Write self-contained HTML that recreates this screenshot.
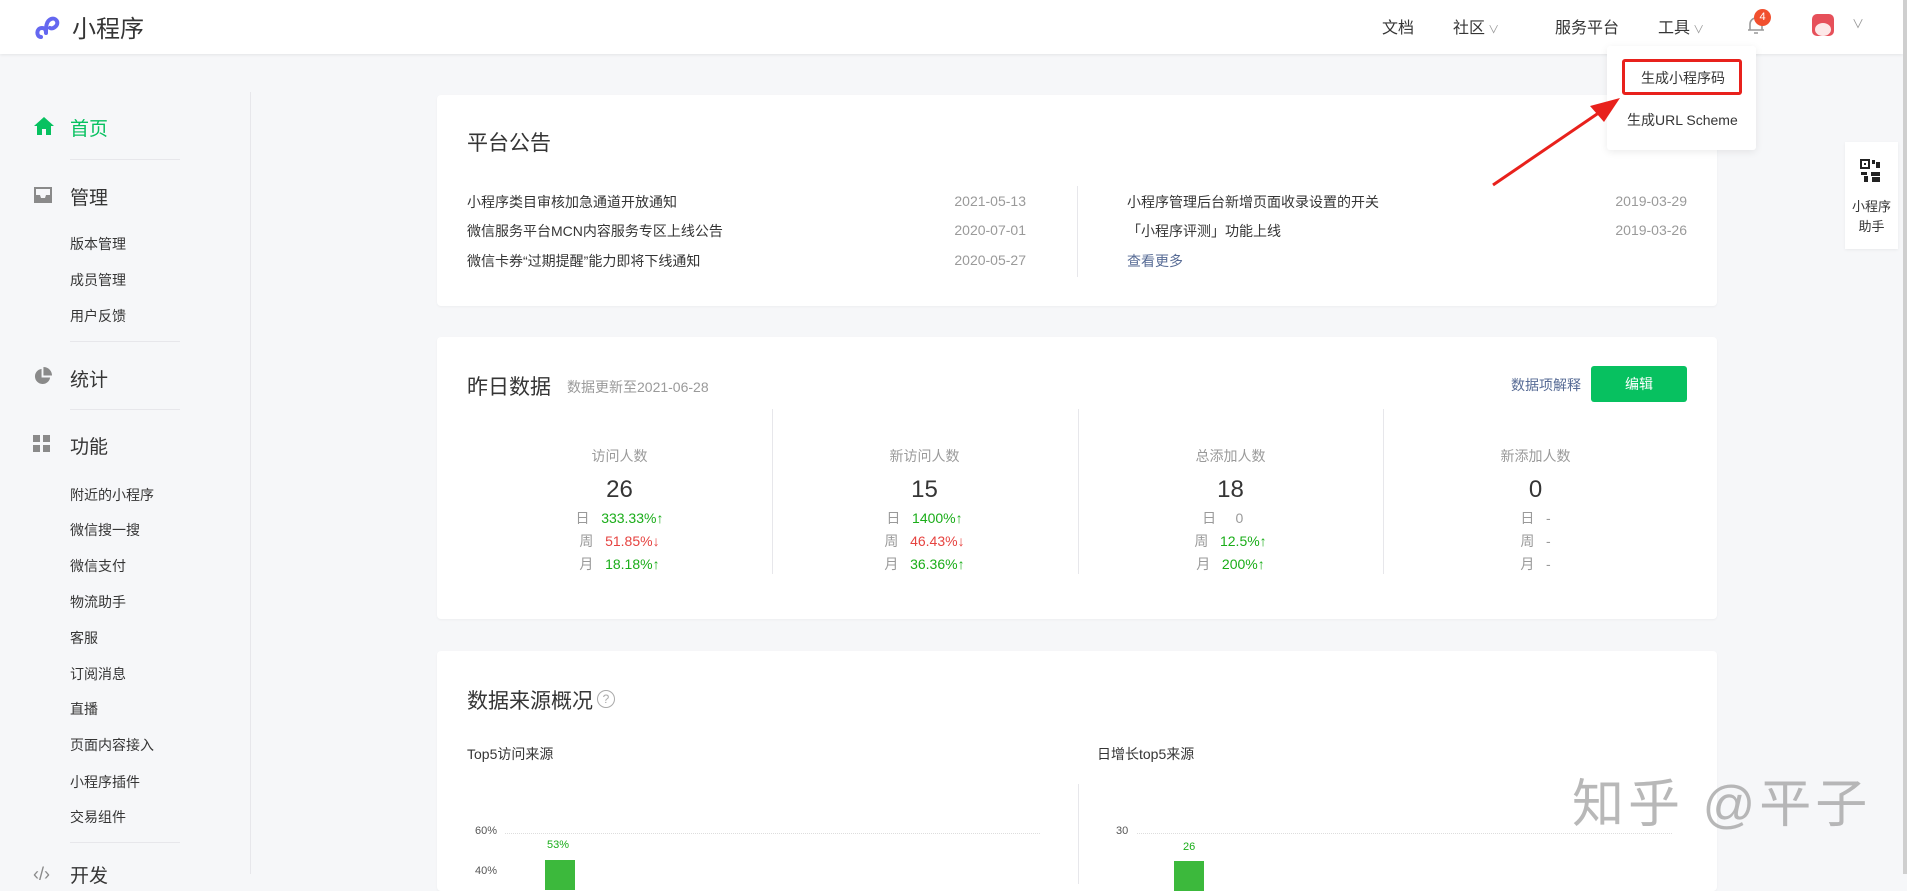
<!DOCTYPE html>
<html><head><meta charset="utf-8"><style>
*{margin:0;padding:0;box-sizing:border-box}
body{width:1907px;height:874px;overflow:hidden;background:#f6f7f9;font-family:"Liberation Sans","Noto Sans CJK SC",sans-serif;color:#353535;position:relative}
.a{position:absolute;white-space:nowrap}
.hdr{position:absolute;left:0;top:0;width:1903px;height:54px;background:#fff;box-shadow:0 1px 3px rgba(0,0,0,.08)}
.card{position:absolute;left:437px;width:1280px;background:#fff;border-radius:4px;box-shadow:0 1px 2px rgba(0,0,0,.04)}
.nav{font-size:19px;color:#353535}
.sub{font-size:14px;color:#353535}
.hl{position:absolute;left:70px;width:110px;height:1px;background:#e7e7eb}
.n{font-size:14px;color:#353535}
.d{font-size:14px;color:#9a9a9a}
.g{color:#1aad19}.r{color:#e64340}
.col{position:absolute;top:0;width:305px;text-align:center}
.st{font-size:14px;line-height:23px;color:#9a9a9a}
</style></head><body>
<div class="hdr"></div>
<svg class="a" style="left:33px;top:11px" width="32" height="32" viewBox="0 0 32 32"><path d="M8 26c-5 0-5-9 1-9M9 17c3 0 4 2 4 5v0M13 22c0-6 0-12 5-14c5-2 9 4 4 8c-2 1.5-4 1.5-5 1" fill="none" stroke="#6467f0" stroke-width="4" stroke-linecap="round"/></svg>
<div class="a" style="left:72px;top:9px;font-size:24px;color:#353535">小程序</div>
<div class="a" style="left:1382px;top:14px;font-size:16px">文档</div>
<div class="a" style="left:1453px;top:14px;font-size:16px">社区<span style="font-size:11px;color:#999"> ∨</span></div>
<div class="a" style="left:1555px;top:14px;font-size:16px">服务平台</div>
<div class="a" style="left:1658px;top:14px;font-size:16px">工具<span style="font-size:11px;color:#999"> ∨</span></div>
<svg class="a" style="left:1745px;top:14px" width="22" height="22" viewBox="0 0 22 22"><path d="M5 16V10a6 6 0 0 1 12 0v6zM3 16h16M9 19h4" fill="none" stroke="#999" stroke-width="1.6"/></svg>
<div class="a" style="left:1754px;top:9px;width:17px;height:17px;border-radius:50%;background:#f1502f;color:#fff;font-size:11px;text-align:center;line-height:17px">4</div>
<div class="a" style="left:1812px;top:14px;width:22px;height:22px;border-radius:5px;background:#e6505a;overflow:hidden"><div style="position:absolute;left:3px;top:9px;width:16px;height:13px;border-radius:50%;background:#fde8e8"></div></div>
<div class="a" style="left:1852px;top:15px;font-size:12px;color:#999">∨</div>
<div class="a" style="left:1903px;top:0;width:4px;height:874px;background:#cfcfcf"></div>

<div class="a" style="left:250px;top:92px;width:1px;height:782px;background:#e7e7eb"></div>
<svg class="a" style="left:33px;top:116px" width="22" height="20" viewBox="0 0 22 20"><path d="M11 1L1 10h3v9h5v-6h4v6h5v-9h3z" fill="#07c160"/></svg>
<div class="a nav" style="left:70px;top:114px;color:#07c160">首页</div>
<div class="hl" style="top:159px"></div>
<svg class="a" style="left:33px;top:186px" width="20" height="18" viewBox="0 0 20 18"><path d="M2 2h16v14H2z" fill="none" stroke="#8a8a8a" stroke-width="2"/><path d="M2 9h5l1 3h4l1-3h5v7H2z" fill="#8a8a8a"/></svg>
<div class="a nav" style="left:70px;top:183px">管理</div>
<div class="a sub" style="left:70px;top:234px">版本管理</div>
<div class="a sub" style="left:70px;top:270px">成员管理</div>
<div class="a sub" style="left:70px;top:306px">用户反馈</div>
<div class="hl" style="top:341px"></div>
<svg class="a" style="left:33px;top:367px" width="19" height="19" viewBox="0 0 20 20"><path d="M9 2A8 8 0 1 0 18 11H9z" fill="#8a8a8a"/><path d="M11 0v9h9A9 9 0 0 0 11 0z" fill="#8a8a8a"/></svg>
<div class="a nav" style="left:70px;top:365px">统计</div>
<div class="hl" style="top:409px"></div>
<svg class="a" style="left:33px;top:435px" width="18" height="18" viewBox="0 0 18 18" fill="#8a8a8a"><rect width="7" height="7"/><rect x="10" width="7" height="7"/><rect y="10" width="7" height="7"/><rect x="10" y="10" width="7" height="7"/></svg>
<div class="a nav" style="left:70px;top:432px">功能</div>
<div class="a sub" style="left:70px;top:485px">附近的小程序</div>
<div class="a sub" style="left:70px;top:520px">微信搜一搜</div>
<div class="a sub" style="left:70px;top:556px">微信支付</div>
<div class="a sub" style="left:70px;top:592px">物流助手</div>
<div class="a sub" style="left:70px;top:628px">客服</div>
<div class="a sub" style="left:70px;top:664px">订阅消息</div>
<div class="a sub" style="left:70px;top:699px">直播</div>
<div class="a sub" style="left:70px;top:735px">页面内容接入</div>
<div class="a sub" style="left:70px;top:772px">小程序插件</div>
<div class="a sub" style="left:70px;top:807px">交易组件</div>
<div class="hl" style="top:842px"></div>
<div class="a" style="left:33px;top:864px;font-size:18px;color:#8a8a8a">‹/›</div>
<div class="a nav" style="left:70px;top:861px">开发</div>

<div class="card" style="top:95px;height:211px">
 <div class="a" style="left:30px;top:32px;font-size:21px">平台公告</div>
 <div class="a n" style="left:30px;top:97px">小程序类目审核加急通道开放通知</div>
 <div class="a n" style="left:30px;top:126px">微信服务平台MCN内容服务专区上线公告</div>
 <div class="a n" style="left:30px;top:156px">微信卡券“过期提醒”能力即将下线通知</div>
 <div class="a d" style="right:691px;top:98px">2021-05-13</div>
 <div class="a d" style="right:691px;top:127px">2020-07-01</div>
 <div class="a d" style="right:691px;top:157px">2020-05-27</div>
 <div class="a" style="left:640px;top:91px;width:1px;height:91px;background:#e7e7eb"></div>
 <div class="a n" style="left:690px;top:97px">小程序管理后台新增页面收录设置的开关</div>
 <div class="a n" style="left:690px;top:126px">「小程序评测」功能上线</div>
 <div class="a n" style="left:690px;top:156px;color:#576b95">查看更多</div>
 <div class="a d" style="right:30px;top:98px">2019-03-29</div>
 <div class="a d" style="right:30px;top:127px">2019-03-26</div>
</div>

<div class="card" style="top:337px;height:282px">
 <div class="a" style="left:30px;top:34px;font-size:21px">昨日数据</div>
 <div class="a" style="left:130px;top:40px;font-size:14px;color:#9a9a9a">数据更新至2021-06-28</div>
 <div class="a" style="right:136px;top:38px;font-size:14px;color:#576b95">数据项解释</div>
 <div class="a" style="left:1154px;top:29px;width:96px;height:36px;background:#07c160;border-radius:3px;color:#fff;font-size:14px;text-align:center;line-height:36px">编辑</div>
 <div class="a" style="left:335px;top:72px;width:1px;height:165px;background:#e7e7eb"></div>
 <div class="a" style="left:641px;top:72px;width:1px;height:165px;background:#e7e7eb"></div>
 <div class="a" style="left:946px;top:72px;width:1px;height:165px;background:#e7e7eb"></div>
 <div style="position:absolute;left:30px;top:72px;width:1222px;height:170px">
  <div class="col" style="left:0"><div style="font-size:14px;color:#9a9a9a;margin-top:37px">访问人数</div><div style="font-size:24px;margin-top:10px;color:#353535">26</div>
   <div class="st" style="margin-top:3px">日 &nbsp; <span class="g">333.33%↑</span><br>周 &nbsp; <span class="r">51.85%↓</span><br>月 &nbsp; <span class="g">18.18%↑</span></div></div>
  <div class="col" style="left:305px"><div style="font-size:14px;color:#9a9a9a;margin-top:37px">新访问人数</div><div style="font-size:24px;margin-top:10px;color:#353535">15</div>
   <div class="st" style="margin-top:3px">日 &nbsp; <span class="g">1400%↑</span><br>周 &nbsp; <span class="r">46.43%↓</span><br>月 &nbsp; <span class="g">36.36%↑</span></div></div>
  <div class="col" style="left:611px"><div style="font-size:14px;color:#9a9a9a;margin-top:37px">总添加人数</div><div style="font-size:24px;margin-top:10px;color:#353535">18</div>
   <div class="st" style="margin-top:3px">日 &nbsp; &nbsp; 0 &nbsp; &nbsp;<br>周 &nbsp; <span class="g">12.5%↑</span><br>月 &nbsp; <span class="g">200%↑</span></div></div>
  <div class="col" style="left:916px"><div style="font-size:14px;color:#9a9a9a;margin-top:37px">新添加人数</div><div style="font-size:24px;margin-top:10px;color:#353535">0</div>
   <div class="st" style="margin-top:3px">日 &nbsp; -<br>周 &nbsp; -<br>月 &nbsp; -</div></div>
 </div>
</div>

<div class="card" style="top:651px;height:240px">
 <div class="a" style="left:30px;top:34px;font-size:21px">数据来源概况</div>
 <div class="a" style="left:160px;top:39px;width:18px;height:18px;border:1px solid #aaa;border-radius:50%;font-size:12px;color:#aaa;text-align:center;line-height:16px">?</div>
 <div class="a" style="left:30px;top:93px;font-size:14px">Top5访问来源</div>
 <div class="a" style="left:660px;top:93px;font-size:14px">日增长top5来源</div>
 <div class="a" style="left:641px;top:133px;width:1px;height:100px;background:#e7e7eb"></div>
 <div class="a" style="left:38px;top:174px;font-size:11px;color:#555">60%</div>
 <div class="a" style="left:38px;top:214px;font-size:11px;color:#555">40%</div>
 <div class="a" style="left:68px;top:182px;width:535px;border-top:1px dotted #ddd"></div>
 <div class="a" style="left:110px;top:188px;font-size:11px;color:#1aad19">53%</div>
 <div class="a" style="left:108px;top:209px;width:30px;height:30px;background:#3cb93c"></div>
 <div class="a" style="left:679px;top:174px;font-size:11px;color:#555">30</div>
 <div class="a" style="left:700px;top:182px;width:535px;border-top:1px dotted #ddd"></div>
 <div class="a" style="left:746px;top:190px;font-size:11px;color:#1aad19">26</div>
 <div class="a" style="left:737px;top:210px;width:30px;height:30px;background:#3cb93c"></div>
</div>

<div class="a" style="left:1572px;top:762px;font-size:52px;color:rgba(160,160,160,.75);letter-spacing:4px">知乎 @平子</div>

<div class="a" style="left:1845px;top:142px;width:53px;height:107px;background:#fff;box-shadow:0 1px 3px rgba(0,0,0,.06)">
 <svg style="position:absolute;left:15px;top:17px" width="22" height="24" viewBox="0 0 22 24" fill="#222"><rect x="1" y="1" width="8" height="8" fill="none" stroke="#222" stroke-width="2"/><rect x="4" y="4" width="2" height="2"/><rect x="12" y="1" width="3" height="4"/><rect x="16" y="3" width="4" height="6"/><rect x="1" y="13" width="6" height="3"/><rect x="4" y="17" width="4" height="6"/><rect x="11" y="13" width="9" height="4"/><rect x="12" y="18" width="8" height="5"/></svg>
 <div style="position:absolute;left:0;width:53px;top:55px;text-align:center;font-size:13px;line-height:20px;color:#353535">小程序<br>助手</div>
</div>

<div class="a" style="left:1607px;top:46px;width:149px;height:104px;background:#fff;border-radius:3px;box-shadow:0 2px 8px rgba(0,0,0,.08)"></div>
<div class="a" style="left:1622px;top:59px;width:120px;height:36px;border:3px solid #e8211c;border-radius:3px"></div>
<div class="a" style="left:1641px;top:68px;font-size:14px">生成小程序码</div>
<div class="a" style="left:1627px;top:110px;font-size:14px">生成URL Scheme</div>

<svg class="a" style="left:0;top:0" width="1907" height="874"><path d="M1493 185L1600 112" stroke="#e8211c" stroke-width="3"/><path d="M1620 98L1590 106L1604 122Z" fill="#e8211c"/></svg>
</body></html>
